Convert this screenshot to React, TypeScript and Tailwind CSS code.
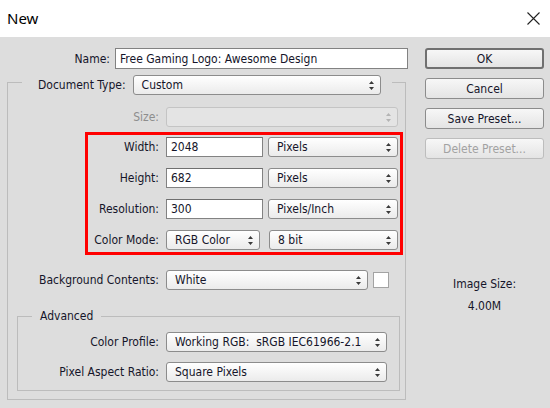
import React from 'react';

const ui = "font-['DejaVu_Sans_Condensed','DejaVu_Sans',sans-serif] text-[12px] text-[#15152a]";

function Arrows({ dim = false }: { dim?: boolean }) {
  return (
    <svg width="5" height="9" viewBox="0 0 5 9" className="shrink-0">
      <path d="M2.5 0 L5 3 H0 Z M0 6 H5 L2.5 9 Z" fill={dim ? '#b4b4b4' : '#3a3a3a'} />
    </svg>
  );
}

function Select({ value, w, dim = false }: { value?: string; w: string; dim?: boolean }) {
  return (
    <div
      className={`${w} h-[20px] flex items-center justify-between pl-[8px] pr-[6px] rounded-[3px] border ${
        dim ? 'border-[#c4c4c4] bg-[#e4e4e4]' : 'border-[#8c8c8c] bg-linear-to-b from-white to-[#ebebeb]'
      }`}
    >
      <span className="whitespace-pre leading-none">{value}</span>
      <Arrows dim={dim} />
    </div>
  );
}

function Input({ value, w }: { value: string; w: string }) {
  return (
    <div className={`${w} h-[20px] flex items-center pl-[4px] bg-white border border-[#828282] border-t-[#6f6f6f]`}>
      <span className="whitespace-nowrap leading-none">{value}</span>
    </div>
  );
}

function Button({ label, primary = false, disabled = false }: { label: string; primary?: boolean; disabled?: boolean }) {
  return (
    <div
      className={`h-[21px] w-[119px] flex items-center justify-center rounded-[3px] bg-linear-to-b from-[#f7f7f7] to-[#e4e4e4] ${
        primary ? 'border-2 border-[#707070]' : disabled ? 'border border-[#bdbdbd]' : 'border border-[#8c8c8c]'
      } ${disabled ? 'text-[#a2a2a2]' : ''}`}
    >
      {label}
    </div>
  );
}

export default function App() {
  return (
    <div className={`w-[550px] h-[408px] bg-[#dddddd] flex flex-col ${ui}`}>
      {/* title bar */}
      <div className="h-[37px] bg-white flex items-center justify-between pl-[7px] pr-[10px]">
        <span className="font-['Noto_Sans',sans-serif] text-[15px] text-black">New</span>
        <svg width="13" height="13" viewBox="0 0 13 13">
          <path d="M0.5 0.5 L12.5 12.5 M12.5 0.5 L0.5 12.5" stroke="#222" strokeWidth="1.1" />
        </svg>
      </div>

      <div className="flex pl-[7px] pt-[11px]">
        {/* left column */}
        <div className="w-[401px] flex flex-col">
          <div className="flex items-center h-[21px]">
            <span className="w-[103px] text-right">Name:</span>
            <div className="ml-[5px] w-[293px] h-[21px] flex items-center pl-[4px] bg-white border border-[#828282]">
              Free Gaming Logo: Awesome Design
            </div>
          </div>

          <div className="mt-[13px] w-[399px] h-[318px] border border-[#bcbcbc] flex flex-col">
            {/* legend: document type */}
            <div className="-mt-[8px] ml-[14px] w-[370px] bg-[#dddddd] flex items-center pl-[16px]">
              <span>Document Type:</span>
              <Select value="Custom" w="w-[248px] ml-[7px]" />
            </div>

            <div className="mt-[12px] flex items-center">
              <span className="w-[151px] text-right text-[#8d8d8d]">Size:</span>
              <Select w="w-[232px] ml-[7px]" dim />
            </div>

            {/* highlighted dimensions */}
            <div className="mt-[5px] ml-[77px] w-[318px] border-[3px] border-[#ff0000] py-[2px] flex flex-col gap-[11px]">
              <div className="flex items-center">
                <span className="w-[71px] text-right">Width:</span>
                <Input value="2048" w="w-[97px] ml-[7px]" />
                <Select value="Pixels" w="w-[130px] ml-[5px]" />
              </div>
              <div className="flex items-center">
                <span className="w-[71px] text-right">Height:</span>
                <Input value="682" w="w-[97px] ml-[7px]" />
                <Select value="Pixels" w="w-[130px] ml-[5px]" />
              </div>
              <div className="flex items-center">
                <span className="w-[71px] text-right">Resolution:</span>
                <Input value="300" w="w-[97px] ml-[7px]" />
                <Select value="Pixels/Inch" w="w-[130px] ml-[5px]" />
              </div>
              <div className="flex items-center">
                <span className="w-[71px] text-right">Color Mode:</span>
                <Select value="RGB Color" w="w-[94px] ml-[7px]" />
                <Select value="8 bit" w="w-[129px] ml-[9px]" />
              </div>
            </div>

            <div className="mt-[15px] flex items-center">
              <span className="w-[151px] text-right">Background Contents:</span>
              <Select value="White" w="w-[202px] ml-[7px]" />
              <div className="ml-[5px] w-[16px] h-[16px] bg-white border border-[#a3a3a3]" />
            </div>

            {/* advanced group */}
            <div className="mt-[26px] ml-[9px] w-[383px] h-[75px] border border-[#bcbcbc] flex flex-col">
              <div className="-mt-[9px] ml-[14px] self-start bg-[#dddddd] px-[8px] leading-[16px]">Advanced</div>
              <div className="mt-[8px] flex items-center">
                <span className="w-[141px] text-right">Color Profile:</span>
                <Select value="Working RGB:  sRGB IEC61966-2.1" w="w-[221px] ml-[7px]" />
              </div>
              <div className="mt-[10px] flex items-center">
                <span className="w-[141px] text-right">Pixel Aspect Ratio:</span>
                <Select value="Square Pixels" w="w-[221px] ml-[7px]" />
              </div>
            </div>
          </div>
        </div>

        {/* right column */}
        <div className="ml-[17px] w-[119px] flex flex-col gap-[9px]">
          <Button label="OK" primary />
          <Button label="Cancel" />
          <Button label="Save Preset..." />
          <Button label="Delete Preset..." disabled />
          <div className="mt-[108px] flex flex-col items-center">
            <span className="leading-[16px]">Image Size:</span>
            <span className="mt-[6px] leading-[16px]">4.00M</span>
          </div>
        </div>
      </div>
    </div>
  );
}
